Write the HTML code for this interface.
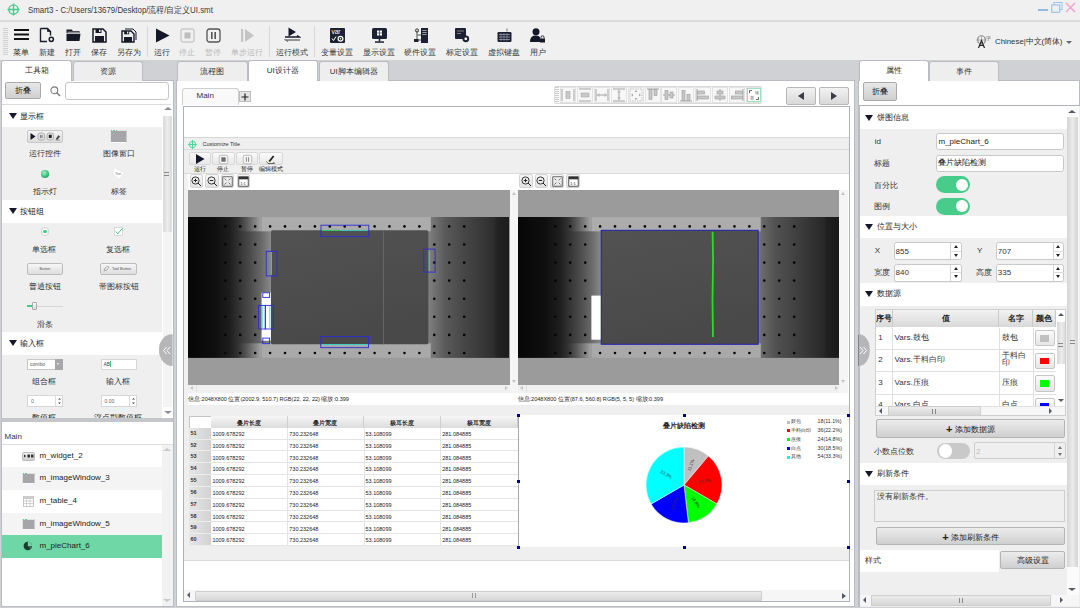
<!DOCTYPE html>
<html><head><meta charset="utf-8">
<style>
*{box-sizing:border-box}
html,body{margin:0;padding:0}
body{width:1080px;height:608px;overflow:hidden;position:relative;background:#f0f0f0;font-family:"Liberation Sans",sans-serif;color:#222;font-size:9px}
.a{position:absolute}
.t{position:absolute;white-space:nowrap;line-height:1}
.tab{position:absolute;border:1px solid #b9bcc2;border-bottom:none;border-radius:3px 3px 0 0;background:#eeeeee;text-align:center;font-size:8px;color:#333}
.tab.on{background:#fff}
.btn{position:absolute;border:1px solid #aaa;border-radius:2px;background:linear-gradient(#e8e8e8,#cfcfcf);text-align:center;color:#222}
.sep{position:absolute;width:1px;background:#d8d8d8}
.hdr{position:absolute;background:#fff}
.tri{position:absolute;width:0;height:0;border-left:4.8px solid transparent;border-right:4.8px solid transparent;border-top:6.2px solid #14182a;margin-top:-1px;margin-left:-0.4px}
</style></head><body>
<!-- title bar -->
<svg class="a" style="left:6.5px;top:2.5px" width="13" height="13" viewBox="0 0 13 13"><circle cx="6.5" cy="6.5" r="4.6" fill="none" stroke="#3fcf8e" stroke-width="1.4"/><path d="M6.5 0.5V12.5M0.5 6.5H12.5" stroke="#3fcf8e" stroke-width="1.4"/></svg>
<div class="t" style="left:28px;top:5.5px;font-size:9px;color:#3a3a3a;transform:scaleX(0.876);transform-origin:0 0">Smart3 - C:/Users/13679/Desktop/流程/自定义UI.smt</div>
<div class="a" style="left:1038px;top:9px;width:10px;height:2px;background:#8fbbe6"></div>
<div class="a" style="left:0;top:20px;width:1080px;height:2px;background:#dadada"></div>


<!-- toolbar -->
<div class="a" style="left:3px;top:28px;width:4px;height:27px;background-image:repeating-linear-gradient(0deg,#c8c8c8 0 1px,transparent 1px 2px);opacity:.8;width:5px"></div>
<!-- menu -->
<svg class="a" style="left:13px;top:28px" width="17" height="13" viewBox="0 0 17 13"><path d="M1 2H16M1 6.5H16M1 11H16" stroke="#111" stroke-width="2"/></svg>
<!-- new -->
<svg class="a" style="left:39px;top:27px" width="17" height="16" viewBox="0 0 17 16"><path d="M1.5 1.5H8.5L11.5 4.5V8.5M8 14.5H1.5V1.5" fill="none" stroke="#1a1d2b" stroke-width="1.4"/><path d="M8.5 1.5L11.5 4.5H8.5Z" fill="#1a1d2b" stroke="#1a1d2b" stroke-width="0.8"/><circle cx="12.3" cy="12.3" r="2.1" fill="#f0f0f0" stroke="#1a1d2b" stroke-width="1.5"/></svg>
<!-- open -->
<svg class="a" style="left:66px;top:28px" width="15" height="14" viewBox="0 0 15 14"><path d="M0.5 1.5H5.5L7 3H13.5V5H0.5Z" fill="#161a28"/><path d="M0.5 5.8H14.5L13.5 13H0.5Z" fill="#161a28"/><path d="M1.5 4.2H13" stroke="#f0f0f0" stroke-width="0.8"/></svg>
<!-- save -->
<svg class="a" style="left:92px;top:28px" width="15" height="15" viewBox="0 0 15 15"><path d="M1 1H11L14 4V14H1Z" fill="none" stroke="#161a28" stroke-width="1.5"/><rect x="3.5" y="1" width="6" height="4" fill="#161a28"/><rect x="7" y="1.8" width="1.5" height="2.2" fill="#f0f0f0"/><rect x="3" y="8" width="9" height="6" fill="#161a28"/></svg>
<!-- save as -->
<svg class="a" style="left:121px;top:28px" width="16" height="15" viewBox="0 0 16 15"><path d="M4 1H12L15 4V12" fill="none" stroke="#161a28" stroke-width="1"/><path d="M1 3H10L13 6V14H1Z" fill="#f0f0f0" stroke="#161a28" stroke-width="1.4"/><rect x="3.2" y="3" width="5" height="3.3" fill="#161a28"/><rect x="6" y="3.6" width="1.3" height="1.9" fill="#f0f0f0"/><rect x="3" y="9" width="8" height="5" fill="#161a28"/></svg>
<div class="sep" style="left:147px;top:26px;height:31px"></div>
<!-- run -->
<svg class="a" style="left:155px;top:28px" width="15" height="15" viewBox="0 0 15 15"><path d="M1 0.5L14.5 7.5L1 14.5Z" fill="#151829"/></svg>
<!-- stop (disabled) -->
<svg class="a" style="left:180px;top:28px" width="15" height="15" viewBox="0 0 15 15"><rect x="1" y="1" width="13" height="13" rx="2" fill="none" stroke="#c9c9c9" stroke-width="1.4"/><rect x="4.5" y="4.5" width="6" height="6" fill="#bdbdbd"/></svg>
<!-- pause -->
<svg class="a" style="left:206px;top:28px" width="15" height="15" viewBox="0 0 15 15"><rect x="1" y="1" width="13" height="13" rx="2.5" fill="none" stroke="#555" stroke-width="1.3"/><rect x="5" y="4" width="1.6" height="7" fill="#555"/><rect x="8.4" y="4" width="1.6" height="7" fill="#555"/></svg>
<!-- step (disabled) -->
<svg class="a" style="left:240px;top:28px" width="15" height="15" viewBox="0 0 15 15"><rect x="1" y="1" width="2.2" height="13" fill="#c4c4c4"/><path d="M5 1L14 7.5L5 14Z" fill="#c4c4c4"/></svg>
<div class="sep" style="left:269px;top:26px;height:31px"></div>
<!-- run mode -->
<svg class="a" style="left:284px;top:27px" width="17" height="16" viewBox="0 0 17 16"><path d="M4.5 0.5L12 5L4.5 9.5Z" fill="#151829"/><path d="M1 10H15.5L13 8.5" fill="none" stroke="#151829" stroke-width="1.3"/><path d="M16 13H1.5L4 14.5" fill="none" stroke="#777" stroke-width="1.3"/></svg>
<div class="sep" style="left:314px;top:26px;height:31px"></div>
<!-- var -->
<svg class="a" style="left:330px;top:28px" width="15" height="15" viewBox="0 0 15 15"><rect x="0" y="0" width="15" height="15" rx="1" fill="#1c2233"/><text x="1.5" y="6.3" font-size="6.5" fill="#fff" font-family="Liberation Sans">var</text><path d="M2 10.5L3.5 12.5L6 8.5" fill="none" stroke="#fff" stroke-width="1"/><circle cx="10.5" cy="10.8" r="3" fill="#fff"/><circle cx="10.5" cy="10.8" r="1.8" fill="#1c2233"/><circle cx="10.5" cy="10.8" r="0.8" fill="#fff"/></svg>
<!-- display -->
<svg class="a" style="left:372px;top:28px" width="15" height="15" viewBox="0 0 15 15"><rect x="0" y="0" width="15" height="11" rx="1.5" fill="#1c2233"/><rect x="5" y="2.5" width="2.2" height="2.2" fill="#fff"/><rect x="7.8" y="2.5" width="2.2" height="2.2" fill="#fff"/><rect x="5" y="5.3" width="2.2" height="2.2" fill="#fff"/><rect x="7.8" y="5.3" width="2.2" height="2.2" fill="#fff"/><rect x="6.7" y="11" width="1.6" height="2.5" fill="#1c2233"/><rect x="3" y="13.3" width="9" height="1.5" fill="#1c2233"/></svg>
<!-- hardware -->
<svg class="a" style="left:414px;top:28px" width="14" height="15" viewBox="0 0 14 15"><rect x="7" y="0" width="7" height="15" fill="#1c2233"/><rect x="8.3" y="2" width="4.4" height="0.9" fill="#aaa"/><rect x="8.3" y="4" width="4.4" height="0.9" fill="#aaa"/><rect x="8.3" y="6" width="4.4" height="0.9" fill="#aaa"/><path d="M3 2.5V12H7M3 7H7" fill="none" stroke="#555" stroke-width="1"/><circle cx="3" cy="2.5" r="1.6" fill="none" stroke="#333" stroke-width="1"/><rect x="0" y="11" width="4.5" height="3" fill="#1c2233"/></svg>
<!-- calib -->
<svg class="a" style="left:455px;top:28px" width="15" height="15" viewBox="0 0 15 15"><rect x="0" y="0" width="11" height="11" rx="1" fill="#1c2233"/><path d="M2 3H9M2 5.5H6" stroke="#888" stroke-width="0.9"/><circle cx="10.8" cy="10.8" r="3.4" fill="#1c2233"/><circle cx="10.8" cy="10.8" r="1.4" fill="#fff"/></svg>
<!-- keyboard -->
<svg class="a" style="left:497px;top:28px" width="15" height="15" viewBox="0 0 15 15"><path d="M10 0.5V3.5" stroke="#555" stroke-width="0.8"/><rect x="0.5" y="4" width="14" height="10" rx="1.2" fill="#1c2233"/><path d="M2 6.5H13M2 9H13M2 11.5H13" stroke="#aab" stroke-width="0.7"/><path d="M4 5V13M7 5V13M10 5V13" stroke="#aab" stroke-width="0.5"/></svg>
<!-- user -->
<svg class="a" style="left:530px;top:28px" width="15" height="15" viewBox="0 0 15 15"><circle cx="6" cy="3.8" r="3.5" fill="#151829"/><path d="M0 14C0 9 2.5 7.5 6 7.5C8 7.5 9.5 8.3 10 9.5V14Z" fill="#151829"/><rect x="10" y="10.5" width="5" height="4" fill="#151829"/><path d="M11 10.5V9.3A1.5 1.5 0 0 1 14 9.3V10.5" fill="none" stroke="#151829" stroke-width="0.9"/></svg>
<div class="t" style="left:-9px;width:60px;text-align:center;top:48.8px;font-size:8px;color:#383838">菜单</div>
<div class="t" style="left:17px;width:60px;text-align:center;top:48.8px;font-size:8px;color:#383838">新建</div>
<div class="t" style="left:43px;width:60px;text-align:center;top:48.8px;font-size:8px;color:#383838">打开</div>
<div class="t" style="left:68.5px;width:60px;text-align:center;top:48.8px;font-size:8px;color:#383838">保存</div>
<div class="t" style="left:98.5px;width:60px;text-align:center;top:48.8px;font-size:8px;color:#383838">另存为</div>
<div class="t" style="left:131.5px;width:60px;text-align:center;top:48.8px;font-size:8px;color:#383838">运行</div>
<div class="t" style="left:157.3px;width:60px;text-align:center;top:48.8px;font-size:8px;color:#b8b8b8">停止</div>
<div class="t" style="left:183.3px;width:60px;text-align:center;top:48.8px;font-size:8px;color:#b8b8b8">暂停</div>
<div class="t" style="left:217.3px;width:60px;text-align:center;top:48.8px;font-size:8px;color:#b8b8b8">单步运行</div>
<div class="t" style="left:262px;width:60px;text-align:center;top:48.8px;font-size:8px;color:#383838">运行模式</div>
<div class="t" style="left:307px;width:60px;text-align:center;top:48.8px;font-size:8px;color:#383838">变量设置</div>
<div class="t" style="left:348.5px;width:60px;text-align:center;top:48.8px;font-size:8px;color:#383838">显示设置</div>
<div class="t" style="left:390.3px;width:60px;text-align:center;top:48.8px;font-size:8px;color:#383838">硬件设置</div>
<div class="t" style="left:431.8px;width:60px;text-align:center;top:48.8px;font-size:8px;color:#383838">标定设置</div>
<div class="t" style="left:473.5px;width:60px;text-align:center;top:48.8px;font-size:8px;color:#383838">虚拟键盘</div>
<div class="t" style="left:507.6px;width:60px;text-align:center;top:48.8px;font-size:8px;color:#383838">用户</div>

<!-- language -->
<svg class="a" style="left:976px;top:35px" width="15" height="13" viewBox="0 0 15 13"><circle cx="5.5" cy="5" r="4.3" fill="none" stroke="#777" stroke-width="0.8"/><path d="M1.2 5H9.8M5.5 0.7V9.3M3 1.5C2 4 2 6 3 8.5M8 1.5C9 4 9 6 8 8.5" fill="none" stroke="#888" stroke-width="0.6"/><path d="M2.5 13L5.5 5.5L8.5 13M3.7 10.5H7.3" fill="none" stroke="#222" stroke-width="1.2"/><text x="10" y="5" font-size="5" fill="#555">字</text></svg>
<div class="t" style="left:995px;top:38px;font-size:8px;color:#333;transform:scaleX(0.98);transform-origin:0 0">Chinese|中文(简体)</div>
<div class="a" style="left:1066px;top:41px;width:0;height:0;border-left:3px solid transparent;border-right:3px solid transparent;border-top:3.5px solid #666"></div>
<!-- window controls -->
<svg class="a" style="left:1051px;top:2px" width="12" height="11" viewBox="0 0 12 11"><rect x="3" y="0.5" width="8" height="7" fill="none" stroke="#9cc3ec" stroke-width="1"/><rect x="0.7" y="3" width="8" height="7.3" fill="#f0f0f0" stroke="#9cc3ec" stroke-width="1.2"/></svg>
<svg class="a" style="left:1065px;top:2px" width="11" height="11" viewBox="0 0 11 11"><path d="M1 1L10 10M10 1L1 10" stroke="#eea6cf" stroke-width="1.6"/></svg>

<!-- tab band -->
<div class="a" style="left:0;top:60px;width:1080px;height:548px;background:#cfd1d5"></div>

<!-- left panel -->
<div class="a" style="left:1px;top:80px;width:172.5px;height:527px;background:#fff;border:1px solid #b9bcc2"></div>
<div class="tab on" style="left:1px;top:59.5px;width:71px;height:21.5px;line-height:20px;border-bottom:none">工具箱</div>
<div class="tab" style="left:72.5px;top:61px;width:70px;height:20px;line-height:19px">资源</div>


<!-- left panel content -->
<div class="btn" style="left:5px;top:82px;width:36px;height:17px;line-height:15px;font-size:8px">折叠</div>
<svg class="a" style="left:50px;top:86px" width="11" height="11" viewBox="0 0 11 11"><circle cx="4.3" cy="4.3" r="3.4" fill="none" stroke="#777" stroke-width="1.1"/><path d="M6.8 6.8L10 10" stroke="#777" stroke-width="1.4"/></svg>
<div class="a" style="left:65px;top:82px;width:104px;height:18px;border:1px solid #c6c6c6;border-radius:3px;background:#fff"></div>
<div class="a" style="left:2px;top:104px;width:169px;height:1px;background:#dcdcdc"></div>
<!-- toolbox scroll area -->
<div class="a" style="left:2px;top:105px;width:160px;height:313px;background:#efefef;overflow:hidden">
  <div class="hdr" style="left:0;top:0;width:160px;height:22px"></div>
  <div class="tri" style="left:7px;top:9px"></div>
  <div class="t" style="left:17.5px;top:8.0px;font-size:8px;color:#222">显示框</div>
  <div class="hdr" style="left:0;top:95px;width:160px;height:22.5px"></div>
  <div class="tri" style="left:7px;top:104px"></div>
  <div class="t" style="left:17.5px;top:103.0px;font-size:8px;color:#222">按钮组</div>
  <div class="hdr" style="left:0;top:227px;width:160px;height:22.5px"></div>
  <div class="tri" style="left:7px;top:236px"></div>
  <div class="t" style="left:17.5px;top:235.0px;font-size:8px;color:#222">输入框</div>
</div>
<div class="t" style="left:10px;width:70px;text-align:center;top:150.0px;font-size:8px;color:#333;clip-path:inset(0 0 0px 0)">运行控件</div>
<div class="t" style="left:83.5px;width:70px;text-align:center;top:150.0px;font-size:8px;color:#333;clip-path:inset(0 0 0px 0)">图像窗口</div>
<div class="t" style="left:10px;width:70px;text-align:center;top:188.0px;font-size:8px;color:#333;clip-path:inset(0 0 0px 0)">指示灯</div>
<div class="t" style="left:83.5px;width:70px;text-align:center;top:188.0px;font-size:8px;color:#333;clip-path:inset(0 0 0px 0)">标签</div>
<div class="t" style="left:9px;width:70px;text-align:center;top:245.5px;font-size:8px;color:#333;clip-path:inset(0 0 0px 0)">单选框</div>
<div class="t" style="left:83px;width:70px;text-align:center;top:245.5px;font-size:8px;color:#333;clip-path:inset(0 0 0px 0)">复选框</div>
<div class="t" style="left:9.5px;width:70px;text-align:center;top:282.5px;font-size:8px;color:#333;clip-path:inset(0 0 0px 0)">普通按钮</div>
<div class="t" style="left:83.5px;width:70px;text-align:center;top:282.5px;font-size:8px;color:#333;clip-path:inset(0 0 0px 0)">带图标按钮</div>
<div class="t" style="left:9.5px;width:70px;text-align:center;top:320.5px;font-size:8px;color:#333;clip-path:inset(0 0 0px 0)">滑条</div>
<div class="t" style="left:9px;width:70px;text-align:center;top:377.5px;font-size:8px;color:#333;clip-path:inset(0 0 0px 0)">组合框</div>
<div class="t" style="left:83px;width:70px;text-align:center;top:377.5px;font-size:8px;color:#333;clip-path:inset(0 0 0px 0)">输入框</div>
<div class="t" style="left:9px;width:70px;text-align:center;top:414.0px;font-size:8px;color:#333;clip-path:inset(0 0 4px 0)">数值框</div>
<div class="t" style="left:83px;width:70px;text-align:center;top:414.0px;font-size:8px;color:#333;clip-path:inset(0 0 4px 0)">浮点型数值框</div>

<!-- widget icons -->
<div class="a" style="left:27px;top:130px;width:36px;height:13px;border:1px solid #c8c8c8;border-radius:2px;background:linear-gradient(#f4f4f4,#dedede)"></div>
<svg class="a" style="left:28px;top:131px" width="34" height="11" viewBox="0 0 34 11"><path d="M2.5 2L7.5 5.5L2.5 9Z" fill="#151829"/><rect x="10" y="2" width="6.5" height="7" rx="1.8" fill="#e0e0e0" stroke="#999" stroke-width="0.7"/><path d="M12.6 4V7M14 4V7" stroke="#333" stroke-width="0.6"/><rect x="19" y="2" width="6.5" height="7" rx="1.8" fill="#e0e0e0" stroke="#999" stroke-width="0.7"/><rect x="20.8" y="3.8" width="2.9" height="3.2" fill="#222"/><path d="M28 8L30.5 4.5L31.8 5.5L29.3 8.5ZM27.5 9H32" fill="#444" stroke="#444" stroke-width="0.5"/></svg>
<div class="a" style="left:110px;top:130px;width:17px;height:12.5px;background:#a6a6aa;border:1px solid #e4e4e4;border-bottom:1.5px solid #fafafa;border-right:1px solid #c8c8c8"></div><div class="a" style="left:111px;top:130px;width:6px;height:1px;background:repeating-linear-gradient(90deg,#5fd08f 0 1px,transparent 1px 1.6px)"></div>
<div class="a" style="left:41px;top:170px;width:7.5px;height:7.5px;border-radius:50%;background:radial-gradient(circle at 40% 35%,#a8f0c8,#2dbb73 60%,#1d8f55)"></div>
<svg class="a" style="left:111px;top:166px" width="15" height="15" viewBox="0 0 15 15"><path d="M3 1.5L13.5 6.5L8.5 13.5L1.5 8Z" fill="#fff" stroke="#e2e2e2" stroke-width="0.7"/><text x="4" y="8.5" font-size="3.4" fill="#777" font-family="Liberation Sans">Text</text></svg>
<div class="a" style="left:40.5px;top:227px;width:8.5px;height:8.5px;border-radius:50%;border:1px solid #cfcfcf;background:#fff"></div>
<div class="a" style="left:43px;top:229.5px;width:3.5px;height:3.5px;border-radius:50%;background:#3ccf86"></div>
<svg class="a" style="left:114px;top:227px" width="9" height="9" viewBox="0 0 9 9"><rect x="0.5" y="0.5" width="8" height="8" fill="#fff" stroke="#d0d0d0" stroke-width="0.8"/><path d="M1.8 4.5L3.8 6.8L8.5 1.2" fill="none" stroke="#3ccf86" stroke-width="1"/></svg>
<div class="a" style="left:27px;top:263px;width:36px;height:12px;border:1px solid #bdbdbd;border-radius:2px;background:linear-gradient(#f7f7f7,#dddddd);font-size:3.8px;line-height:10px;text-align:center;color:#555">Button</div>
<div class="a" style="left:100px;top:263px;width:37px;height:12px;border:1px solid #bdbdbd;border-radius:2px;background:linear-gradient(#f7f7f7,#dddddd);font-size:3.8px;line-height:10px;text-align:center;color:#555;padding-left:6px">Tool Button</div>
<svg class="a" style="left:103px;top:265px" width="7" height="7" viewBox="0 0 7 7"><path d="M1 6L2 3L5 1L6 2L4 5Z" fill="none" stroke="#888" stroke-width="0.6"/></svg>
<div class="a" style="left:27px;top:305.5px;width:36px;height:1px;background:#d6d6d6"></div>
<div class="a" style="left:27px;top:305px;width:6px;height:2px;background:#3ccf86"></div>
<div class="a" style="left:32px;top:302px;width:4.5px;height:8px;border:1px solid #aaa;border-radius:1px;background:linear-gradient(#fafafa,#dcdcdc)"></div>
<div class="a" style="left:27px;top:358.5px;width:36px;height:11.5px;border:1px solid #c8c8c8;background:#fff;font-size:5px;line-height:9.5px;color:#555;padding-left:2px">combo</div>
<div class="a" style="left:55px;top:358.5px;width:8px;height:11.5px;background:#a7a7aa"></div>
<div class="a" style="left:57.3px;top:363px;width:0;height:0;border-left:1.8px solid transparent;border-right:1.8px solid transparent;border-top:2px solid #fff"></div>
<div class="a" style="left:100.5px;top:358.5px;width:36px;height:11.5px;border:1px solid #d6d6d6;background:#fff;font-size:5px;line-height:9.5px;color:#444;padding-left:2px">AB<span style="display:inline-block;width:0.6px;height:6px;background:#4c8;vertical-align:middle"></span></div>
<div class="a" style="left:27px;top:395px;width:36px;height:12px;border:1px solid #d6d6d6;background:#fff;font-size:5px;line-height:10px;color:#666;padding-left:3px">0</div>
<div class="a" style="left:55px;top:396px;width:1px;height:10px;background:#ddd"></div>
<div class="a" style="left:100.5px;top:395px;width:36px;height:12px;border:1px solid #d6d6d6;background:#fff;font-size:5px;line-height:10px;color:#666;padding-left:3px">0.00</div>
<div class="a" style="left:128.5px;top:396px;width:1px;height:10px;background:#ddd"></div>
<svg class="a" style="left:56px;top:396px" width="7" height="10" viewBox="0 0 7 10"><path d="M2 3.5L3.5 2L5 3.5M2 6.5L3.5 8L5 6.5" fill="#444"/></svg>
<svg class="a" style="left:129.5px;top:396px" width="7" height="10" viewBox="0 0 7 10"><path d="M2 3.5L3.5 2L5 3.5M2 6.5L3.5 8L5 6.5" fill="#444"/></svg>
<!-- toolbox scrollbar -->
<div class="a" style="left:162px;top:105px;width:10.5px;height:313px;background:#fff"></div>
<div class="a" style="left:163px;top:115.5px;width:9px;height:116.5px;background:linear-gradient(90deg,#d9d9d9,#ececec 50%,#d9d9d9);border-radius:1px"></div>
<div class="a" style="left:163px;top:232px;width:9px;height:175px;background:#f4f4f4"></div>
<div class="a" style="left:164px;top:172px;width:5px;height:4px;background:repeating-linear-gradient(#888 0 0.7px,transparent 0.7px 1.6px)"></div>
<div class="a" style="left:163.5px;top:107px;width:0;height:0;border-left:4px solid transparent;border-right:4px solid transparent;border-bottom:3.5px solid #8a8e99"></div>
<div class="a" style="left:163.5px;top:411px;width:0;height:0;border-left:4px solid transparent;border-right:4px solid transparent;border-top:3.5px solid #8a8e99"></div>
<!-- collapse handle -->
<div class="a" style="left:158.8px;top:334.2px;width:27.6px;height:31.8px;border-radius:50%;background:#b6b6b9;clip-path:inset(0 13.8px 0 0)"></div>
<svg class="a" style="left:162px;top:345.5px" width="9" height="9" viewBox="0 0 9 9"><path d="M8 1L5 4.5L8 8M4.5 1L1.5 4.5L4.5 8" fill="none" stroke="#fff" stroke-width="1"/></svg>
<!-- splitter -->
<div class="a" style="left:2px;top:418px;width:171px;height:3.5px;background:#c4c6ca"></div>
<!-- object tree -->
<div class="t" style="left:4.5px;top:433px;font-size:8px;color:#333">Main</div>
<div class="a" style="left:2px;top:444px;width:171px;height:1px;background:#dedede"></div>
<div class="a" style="left:2px;top:467px;width:159.5px;height:23px;background:#f4f4f4"></div>
<div class="a" style="left:2px;top:512.5px;width:159.5px;height:22.5px;background:#f4f4f4"></div>
<div class="a" style="left:2px;top:535px;width:159.5px;height:22.5px;background:#6ed7a5"></div>
<div class="a" style="left:161.5px;top:445px;width:11px;height:161px;background:#f2f2f2"></div>
<div class="a" style="left:162.5px;top:447.5px;width:0;height:0;border-left:4px solid transparent;border-right:4px solid transparent;border-bottom:3.5px solid #c8c8c8"></div>
<div class="a" style="left:162.5px;top:599px;width:0;height:0;border-left:4px solid transparent;border-right:4px solid transparent;border-top:3.5px solid #c8c8c8"></div>
<div class="t" style="left:39.5px;top:451.5px;font-size:8px;color:#222">m_widget_2</div>
<div class="t" style="left:39.5px;top:474.0px;font-size:8px;color:#222">m_imageWindow_3</div>
<div class="t" style="left:39.5px;top:496.5px;font-size:8px;color:#222">m_table_4</div>
<div class="t" style="left:39.5px;top:519.5px;font-size:8px;color:#222">m_imageWindow_5</div>
<div class="t" style="left:39.5px;top:541.5px;font-size:8px;color:#222">m_pieChart_6</div>

<div class="a" style="left:22px;top:451.5px;width:12.5px;height:9px;border-radius:2px;background:linear-gradient(#efefef,#cfcfcf);border:0.5px solid #bbb"></div>
<svg class="a" style="left:23px;top:453px" width="11" height="6" viewBox="0 0 11 6"><path d="M1 1.5L3 3L1 4.5Z" fill="#222"/><rect x="4.5" y="1.5" width="2.5" height="3" fill="#333"/><rect x="8" y="1.5" width="2.5" height="3" fill="#333"/></svg>
<div class="a" style="left:22px;top:473px;width:12.5px;height:11px;background:#a6a6aa;border:1px solid #e2e2e2;border-bottom:1.5px solid #fafafa;border-right:1px solid #c8c8c8"></div><div class="a" style="left:23px;top:473px;width:5px;height:1px;background:repeating-linear-gradient(90deg,#5fd08f 0 1px,transparent 1px 1.6px)"></div>
<div class="a" style="left:22px;top:518.5px;width:12.5px;height:11px;background:#a6a6aa;border:1px solid #e2e2e2;border-bottom:1.5px solid #fafafa;border-right:1px solid #c8c8c8"></div><div class="a" style="left:23px;top:518.5px;width:5px;height:1px;background:repeating-linear-gradient(90deg,#5fd08f 0 1px,transparent 1px 1.6px)"></div>
<svg class="a" style="left:23px;top:495.5px" width="11" height="11" viewBox="0 0 11 11"><rect x="0.5" y="0.5" width="10" height="10" fill="#fff" stroke="#bbb" stroke-width="0.8"/><rect x="0.5" y="0.5" width="10" height="2.5" fill="#ccc"/><path d="M0.5 5H10.5M0.5 7.5H10.5M3.5 3V10.5M7 3V10.5" stroke="#bbb" stroke-width="0.6"/></svg>
<svg class="a" style="left:23px;top:541px" width="9" height="10" viewBox="0 0 9 10"><circle cx="4.8" cy="5" r="4.2" fill="#1d3b2f"/><path d="M4.8 5L4.8 0.8A4.2 4.2 0 0 1 9 5Z" fill="#6ed7a5"/><path d="M4.8 5L9 5A4.2 4.2 0 0 1 7.5 8.2Z" fill="#3a6b55"/></svg>

<!-- center panel -->
<div class="a" style="left:176px;top:80px;width:679px;height:527px;background:#fff;border:1px solid #b9bcc2"></div>
<div class="tab" style="left:176.5px;top:61px;width:71px;height:20px;line-height:19px">流程图</div>
<div class="tab on" style="left:247.5px;top:60px;width:70.5px;height:21px;line-height:20px">UI设计器</div>
<div class="tab" style="left:318.5px;top:61px;width:70.5px;height:20px;line-height:19px">UI脚本编辑器</div>


<!-- center content -->
<div class="tab on" style="left:182px;top:87.5px;width:57px;height:17px;background:#f9f9f9;border-color:#d0d0d0"></div><div class="t" style="left:196.5px;top:91.5px;font-size:8px;color:#333">Main</div>
<div class="a" style="left:239px;top:91px;width:12px;height:10.5px;border:1px solid #bdbdbd;background:#e4e4e4"></div>
<svg class="a" style="left:240px;top:91.5px" width="10" height="10" viewBox="0 0 10 10"><path d="M5 1.5V8.5M1.5 5H8.5" stroke="#222" stroke-width="1.2"/></svg>
<!-- align toolbar -->
<div class="a" style="left:554px;top:85.5px;width:208px;height:18px;border:1px solid #dadada;border-radius:2px;background:#fafafa"></div>
<div class="a" style="left:555px;top:87px;width:4px;height:15px;background:repeating-linear-gradient(#ccc 0 1px,transparent 1px 2px)"></div>
<svg class="a" style="left:561px;top:87.5px;background:#f7f7f7;outline:1px solid #e2e2e2;outline-offset:-0.5px" width="14" height="14" viewBox="0 0 14 14"><path d="M1 1V13M13 1V13" stroke="#999" stroke-width="0.9"/><rect x="5" y="3.5" width="4" height="7" fill="#c8c8c8" stroke="#aaa" stroke-width="0.6"/></svg>
<svg class="a" style="left:578px;top:87.5px;background:#f7f7f7;outline:1px solid #e2e2e2;outline-offset:-0.5px" width="14" height="14" viewBox="0 0 14 14"><path d="M1 1H13M1 13H13" stroke="#999" stroke-width="0.9"/><rect x="3" y="5" width="8" height="4" fill="#c8c8c8" stroke="#aaa" stroke-width="0.6"/></svg>
<svg class="a" style="left:595px;top:87.5px;background:#f7f7f7;outline:1px solid #e2e2e2;outline-offset:-0.5px" width="14" height="14" viewBox="0 0 14 14"><path d="M1 1V13M13 1V13M2 7H12" stroke="#999" stroke-width="0.9"/><path d="M2 7L4.5 5V9ZM12 7L9.5 5V9Z" fill="#bbb"/></svg>
<svg class="a" style="left:612px;top:87.5px;background:#f7f7f7;outline:1px solid #e2e2e2;outline-offset:-0.5px" width="14" height="14" viewBox="0 0 14 14"><path d="M1 1H13M1 13H13M7 2V12" stroke="#999" stroke-width="0.9"/><path d="M7 2L5 4.5H9ZM7 12L5 9.5H9Z" fill="#bbb"/></svg>
<svg class="a" style="left:629px;top:87.5px;background:#f7f7f7;outline:1px solid #e2e2e2;outline-offset:-0.5px" width="14" height="14" viewBox="0 0 14 14"><rect x="1" y="1" width="12" height="12" fill="none" stroke="#aaa" stroke-width="0.7" stroke-dasharray="1.5 1"/><path d="M7 2L5.5 4H8.5ZM7 12L5.5 10H8.5ZM2 7L4 5.5V8.5ZM12 7L10 5.5V8.5Z" fill="#aaa"/></svg>
<svg class="a" style="left:646px;top:87.5px;background:#f7f7f7;outline:1px solid #e2e2e2;outline-offset:-0.5px" width="14" height="14" viewBox="0 0 14 14"><path d="M1 1H13" stroke="#999" stroke-width="0.9"/><rect x="3" y="1.5" width="3" height="10" fill="#c8c8c8" stroke="#999" stroke-width="0.6"/><rect x="8" y="1.5" width="3" height="6" fill="#c8c8c8" stroke="#999" stroke-width="0.6"/></svg>
<svg class="a" style="left:662px;top:87.5px;background:#f7f7f7;outline:1px solid #e2e2e2;outline-offset:-0.5px" width="14" height="14" viewBox="0 0 14 14"><path d="M1 7H13" stroke="#999" stroke-width="0.9"/><rect x="3" y="2.5" width="3" height="9" fill="#c8c8c8" stroke="#999" stroke-width="0.6"/><rect x="8" y="4" width="3" height="6" fill="#c8c8c8" stroke="#999" stroke-width="0.6"/></svg>
<svg class="a" style="left:679px;top:87.5px;background:#f7f7f7;outline:1px solid #e2e2e2;outline-offset:-0.5px" width="14" height="14" viewBox="0 0 14 14"><path d="M1 13H13" stroke="#999" stroke-width="0.9"/><rect x="3" y="2.5" width="3" height="10" fill="#c8c8c8" stroke="#999" stroke-width="0.6"/><rect x="8" y="6.5" width="3" height="6" fill="#c8c8c8" stroke="#999" stroke-width="0.6"/></svg>
<svg class="a" style="left:696px;top:87.5px;background:#f7f7f7;outline:1px solid #e2e2e2;outline-offset:-0.5px" width="14" height="14" viewBox="0 0 14 14"><path d="M1 1V13" stroke="#999" stroke-width="0.9"/><rect x="1.5" y="3" width="7" height="3" fill="#c8c8c8" stroke="#999" stroke-width="0.6"/><rect x="1.5" y="8" width="11" height="3" fill="#c8c8c8" stroke="#999" stroke-width="0.6"/></svg>
<svg class="a" style="left:713.3px;top:87.5px;background:#f7f7f7;outline:1px solid #e2e2e2;outline-offset:-0.5px" width="14" height="14" viewBox="0 0 14 14"><path d="M7 1V13" stroke="#999" stroke-width="0.9"/><rect x="4" y="3" width="6" height="3" fill="#c8c8c8" stroke="#999" stroke-width="0.6"/><rect x="2" y="8" width="10" height="3" fill="#c8c8c8" stroke="#999" stroke-width="0.6"/></svg>
<svg class="a" style="left:730.4px;top:87.5px;background:#f7f7f7;outline:1px solid #e2e2e2;outline-offset:-0.5px" width="14" height="14" viewBox="0 0 14 14"><path d="M13 1V13" stroke="#999" stroke-width="0.9"/><rect x="5.5" y="3" width="7" height="3" fill="#c8c8c8" stroke="#999" stroke-width="0.6"/><rect x="1.5" y="8" width="11" height="3" fill="#c8c8c8" stroke="#999" stroke-width="0.6"/></svg>
<svg class="a" style="left:747px;top:87.5px;background:#f7f7f7;outline:1px solid #e2e2e2;outline-offset:-0.5px" width="14" height="14" viewBox="0 0 14 14"><rect x="0.5" y="0.5" width="13" height="13" fill="#fff" stroke="#7fdcae" stroke-width="0.8"/><path d="M2.5 5V2.5H5M11.5 9V11.5H9" fill="none" stroke="#444" stroke-width="0.8"/><text x="7.5" y="5.5" font-size="3.5" fill="#444">缩</text><text x="2.5" y="10.5" font-size="3.5" fill="#444">放</text></svg>

<div class="btn" style="left:786px;top:86.5px;width:30px;height:18px;background:linear-gradient(#f2f2f2,#d9d9d9);border-color:#b8b8b8"></div>
<div class="a" style="left:797.5px;top:91.5px;width:0;height:0;border-top:4px solid transparent;border-bottom:4px solid transparent;border-right:6.5px solid #3a3d45"></div>
<div class="btn" style="left:818.5px;top:86.5px;width:30px;height:18px;background:linear-gradient(#f2f2f2,#d9d9d9);border-color:#b8b8b8"></div>
<div class="a" style="left:830.5px;top:91.5px;width:0;height:0;border-top:4px solid transparent;border-bottom:4px solid transparent;border-left:6.5px solid #3a3d45"></div>
<!-- design frame -->
<div class="a" style="left:182.5px;top:106px;width:667.5px;height:496px;border:1.5px solid #aeb1b7;background:#fff"></div>
<div class="a" style="left:176px;top:80px;width:1px;height:527px;background:#b9bcc2"></div>
<!-- widget area gray -->
<div class="a" style="left:184px;top:137px;width:665px;height:423.5px;background:#efefef"></div>
<div class="a" style="left:184px;top:137px;width:665px;height:1px;background:#d8d8d8"></div>
<svg class="a" style="left:188px;top:139.5px" width="9" height="9" viewBox="0 0 9 9"><circle cx="4.5" cy="4.5" r="3.2" fill="none" stroke="#4fd69b" stroke-width="1"/><path d="M4.5 0V9M0 4.5H9" stroke="#4fd69b" stroke-width="1"/></svg>
<div class="t" style="left:202.5px;top:141.5px;font-size:5.5px;color:#333">Customize Title</div>
<div class="a" style="left:184px;top:149px;width:665px;height:1px;background:#dadada"></div>
<div class="a" style="left:184px;top:173px;width:665px;height:1px;background:#dadada"></div>
<div class="a" style="left:188.5px;top:152.3px;width:22.69999999999999px;height:13.2px;border:1px solid #d8d8d8;border-radius:2px;background:linear-gradient(#fafafa,#e8e8e8)"></div>
<div class="t" style="left:179.85px;width:40px;text-align:center;top:166.5px;font-size:5.6px;color:#222">运行</div>
<div class="a" style="left:212px;top:152.3px;width:22.5px;height:13.2px;border:1px solid #d8d8d8;border-radius:2px;background:linear-gradient(#fafafa,#e8e8e8)"></div>
<div class="t" style="left:203.25px;width:40px;text-align:center;top:166.5px;font-size:5.6px;color:#222">停止</div>
<div class="a" style="left:235.9px;top:152.3px;width:22.099999999999994px;height:13.2px;border:1px solid #d8d8d8;border-radius:2px;background:linear-gradient(#fafafa,#e8e8e8)"></div>
<div class="t" style="left:226.95px;width:40px;text-align:center;top:166.5px;font-size:5.6px;color:#222">暂停</div>
<div class="a" style="left:259.2px;top:152.3px;width:23.5px;height:13.2px;border:1px solid #d8d8d8;border-radius:2px;background:linear-gradient(#fafafa,#e8e8e8)"></div>
<div class="t" style="left:250.95px;width:40px;text-align:center;top:166.5px;font-size:5.6px;color:#222">编辑模式</div>

<svg class="a" style="left:194px;top:153px" width="12" height="12" viewBox="0 0 12 12"><path d="M2 1L10.5 6L2 11Z" fill="#151829"/></svg>
<svg class="a" style="left:218px;top:153.5px" width="11" height="11" viewBox="0 0 11 11"><rect x="1.2" y="1.2" width="8.6" height="8.6" rx="2" fill="#f6f6f6" stroke="#b4b4b4" stroke-width="0.9"/><rect x="3.3" y="3.3" width="4.4" height="4.4" fill="#6e6e6e"/></svg>
<svg class="a" style="left:241.5px;top:153.5px" width="11" height="11" viewBox="0 0 11 11"><rect x="1.2" y="1.2" width="8.6" height="8.6" rx="2" fill="#f6f6f6" stroke="#b4b4b4" stroke-width="0.9"/><path d="M4.4 3.2V7.8M6.6 3.2V7.8" stroke="#777" stroke-width="0.9"/></svg>
<svg class="a" style="left:265px;top:153.5px" width="12" height="11" viewBox="0 0 12 11"><path d="M3.5 7L8 1.5L9.3 2.6L5 8Z" fill="#222"/><path d="M1.5 7.5L3 9.5H9.5L8.5 8" fill="none" stroke="#555" stroke-width="0.9"/></svg>
<!-- image viewer backgrounds -->
<div class="a" style="left:184px;top:174px;width:665px;height:231px;background:#fff"></div>
<div class="a" style="left:184px;top:174px;width:4px;height:231px;background:#f1f1f1"></div>
<div class="a" style="left:188.2px;top:190px;width:321.5px;height:195px;background:#9b9b9b"></div>
<div class="a" style="left:509.7px;top:190px;width:8.3px;height:202.5px;background:#f5f5f5"></div>
<div class="a" style="left:188.2px;top:385px;width:321.5px;height:7.5px;background:#f0f0f0"></div>
<div class="a" style="left:518px;top:190px;width:321px;height:195px;background:#9b9b9b"></div>
<div class="a" style="left:839px;top:190px;width:8.6px;height:202.5px;background:#f5f5f5"></div>
<div class="a" style="left:518px;top:385px;width:321px;height:7.5px;background:#f0f0f0"></div>
<svg class="a" style="left:188.2px;top:216.9px" width="321.2" height="140.9" viewBox="0 0 321.2 140.9">
<defs>
<linearGradient id="gi1" x1="0" x2="1" y1="0" y2="0"><stop offset="0" stop-color="#060606"/><stop offset="0.084" stop-color="#0f0f0f"/><stop offset="0.13" stop-color="#1e1e1e"/><stop offset="0.161" stop-color="#353535"/><stop offset="0.192" stop-color="#4a4a4a"/><stop offset="0.23" stop-color="#6a6a6a"/><stop offset="0.258" stop-color="#8a8a8a"/><stop offset="0.74" stop-color="#8a8a8a"/><stop offset="0.756" stop-color="#7a7a7a"/><stop offset="0.8" stop-color="#5a5a5a"/><stop offset="0.858" stop-color="#474747"/><stop offset="0.908" stop-color="#3a3a3a"/><stop offset="0.951" stop-color="#2e2e2e"/><stop offset="0.963" stop-color="#232323"/><stop offset="1" stop-color="#1c1c1c"/></linearGradient>
<linearGradient id="gi1b" x1="0" x2="1" y1="0" y2="0"><stop offset="0" stop-color="#4a4a4a" stop-opacity="0"/><stop offset="0.6" stop-color="#7a7a7a" stop-opacity="0.8"/><stop offset="1" stop-color="#a6a6a6"/></linearGradient>
<linearGradient id="gi1r" x1="0" x2="0.3" y1="0" y2="1"><stop offset="0" stop-color="#525252"/><stop offset="1" stop-color="#494949"/></linearGradient>
</defs>
<rect width="321.2" height="140.9" fill="url(#gi1)"/>
<rect x="48.80000000000001" y="0" width="25" height="14.299999999999983" fill="url(#gi1b)"/>
<rect x="48.80000000000001" y="126.29999999999998" width="25" height="14.600000000000023" fill="url(#gi1b)"/>
<rect x="73.80000000000001" y="0" width="169" height="14.299999999999983" fill="#acacac"/>
<rect x="73.80000000000001" y="126.29999999999998" width="169" height="14.600000000000023" fill="#a9a9a9"/>
<rect x="83.0" y="13.299999999999983" width="157.40000000000003" height="114.0" rx="1.5" fill="url(#gi1r)"/>
<g fill="#050505"><circle cx="37.3" cy="9.4" r="1.3"/><circle cx="37.3" cy="27.5" r="1.3"/><circle cx="37.3" cy="45.6" r="1.3"/><circle cx="37.3" cy="63.6" r="1.3"/><circle cx="37.3" cy="81.7" r="1.3"/><circle cx="37.3" cy="99.8" r="1.3"/><circle cx="37.3" cy="117.9" r="1.3"/><circle cx="37.3" cy="136.0" r="1.3"/><circle cx="52.2" cy="9.4" r="1.3"/><circle cx="52.2" cy="27.5" r="1.3"/><circle cx="52.2" cy="45.6" r="1.3"/><circle cx="52.2" cy="63.6" r="1.3"/><circle cx="52.2" cy="81.7" r="1.3"/><circle cx="52.2" cy="99.8" r="1.3"/><circle cx="52.2" cy="117.9" r="1.3"/><circle cx="52.2" cy="136.0" r="1.3"/><circle cx="67.2" cy="9.4" r="1.3"/><circle cx="67.2" cy="27.5" r="1.3"/><circle cx="67.2" cy="45.6" r="1.3"/><circle cx="67.2" cy="63.6" r="1.3"/><circle cx="67.2" cy="81.7" r="1.3"/><circle cx="67.2" cy="99.8" r="1.3"/><circle cx="67.2" cy="117.9" r="1.3"/><circle cx="67.2" cy="136.0" r="1.3"/><circle cx="82.1" cy="9.4" r="1.3"/><circle cx="82.1" cy="136.0" r="1.3"/><circle cx="97.0" cy="9.4" r="1.3"/><circle cx="97.0" cy="136.0" r="1.3"/><circle cx="111.9" cy="9.4" r="1.3"/><circle cx="111.9" cy="136.0" r="1.3"/><circle cx="126.9" cy="9.4" r="1.3"/><circle cx="126.9" cy="136.0" r="1.3"/><circle cx="141.8" cy="9.4" r="1.3"/><circle cx="141.8" cy="136.0" r="1.3"/><circle cx="156.7" cy="9.4" r="1.3"/><circle cx="156.7" cy="136.0" r="1.3"/><circle cx="171.7" cy="9.4" r="1.3"/><circle cx="171.7" cy="136.0" r="1.3"/><circle cx="186.6" cy="9.4" r="1.3"/><circle cx="186.6" cy="136.0" r="1.3"/><circle cx="201.5" cy="9.4" r="1.3"/><circle cx="201.5" cy="136.0" r="1.3"/><circle cx="216.5" cy="9.4" r="1.3"/><circle cx="216.5" cy="136.0" r="1.3"/><circle cx="231.4" cy="9.4" r="1.3"/><circle cx="231.4" cy="136.0" r="1.3"/><circle cx="246.3" cy="9.4" r="1.3"/><circle cx="246.3" cy="27.5" r="1.3"/><circle cx="246.3" cy="45.6" r="1.3"/><circle cx="246.3" cy="63.6" r="1.3"/><circle cx="246.3" cy="81.7" r="1.3"/><circle cx="246.3" cy="99.8" r="1.3"/><circle cx="246.3" cy="117.9" r="1.3"/><circle cx="246.3" cy="136.0" r="1.3"/><circle cx="261.2" cy="9.4" r="1.3"/><circle cx="261.2" cy="27.5" r="1.3"/><circle cx="261.2" cy="45.6" r="1.3"/><circle cx="261.2" cy="63.6" r="1.3"/><circle cx="261.2" cy="81.7" r="1.3"/><circle cx="261.2" cy="99.8" r="1.3"/><circle cx="261.2" cy="117.9" r="1.3"/><circle cx="261.2" cy="136.0" r="1.3"/><circle cx="276.2" cy="9.4" r="1.3"/><circle cx="276.2" cy="27.5" r="1.3"/><circle cx="276.2" cy="45.6" r="1.3"/><circle cx="276.2" cy="63.6" r="1.3"/><circle cx="276.2" cy="81.7" r="1.3"/><circle cx="276.2" cy="99.8" r="1.3"/><circle cx="276.2" cy="117.9" r="1.3"/><circle cx="276.2" cy="136.0" r="1.3"/></g>
<rect x="195.0" y="13.299999999999983" width="0.9" height="114" fill="#6a6a6a"/>
<rect x="73.60000000000002" y="75.6" width="9.3" height="48.1" fill="#fff"/>
<g fill="none" stroke="#2b2bd6" stroke-width="0.9">
<rect x="133.0" y="8.199999999999989" width="47.8" height="11.4"/>
<rect x="78.19999999999999" y="34.29999999999998" width="10.9" height="24.6"/>
<rect x="235.8" y="32.099999999999994" width="11.3" height="23"/>
<rect x="132.8" y="119.6" width="47.7" height="11.1"/>
<rect x="74.80000000000001" y="75.79999999999998" width="6.8" height="4.6"/>
<rect x="70.40000000000003" y="88.4" width="6.9" height="23.6"/>
<rect x="77.30000000000001" y="88.4" width="8" height="23.6"/>
<rect x="74.80000000000001" y="121.1" width="6.8" height="5.6"/>
</g>
<g stroke-width="0.9">
<path d="M133.8 13.400000000000006H151.8" stroke="#22e060"/><path d="M151.8 13.400000000000006H179.8" stroke="#3ad6c8"/>
<path d="M83.40000000000003 35.099999999999994V58.099999999999994" stroke="#33dcd0"/>
<path d="M241.3 33.099999999999994V54.099999999999994" stroke="#33dcd0"/>
<path d="M133.8 127.6H179.8" stroke="#33dcd0"/>
<path d="M74.80000000000001 89.1V111.1M81.80000000000001 89.1V111.1" stroke="#33e0e0"/>
</g>
</svg>
<svg class="a" style="left:518.2px;top:216.9px" width="321.2" height="140.9" viewBox="0 0 321.2 140.9">
<defs>
<linearGradient id="gi2" x1="0" x2="1" y1="0" y2="0"><stop offset="0" stop-color="#060606"/><stop offset="0.084" stop-color="#0f0f0f"/><stop offset="0.13" stop-color="#1e1e1e"/><stop offset="0.161" stop-color="#353535"/><stop offset="0.192" stop-color="#4a4a4a"/><stop offset="0.23" stop-color="#6a6a6a"/><stop offset="0.258" stop-color="#8a8a8a"/><stop offset="0.74" stop-color="#8a8a8a"/><stop offset="0.756" stop-color="#6c6c6c"/><stop offset="0.8" stop-color="#525252"/><stop offset="0.858" stop-color="#424242"/><stop offset="0.908" stop-color="#343434"/><stop offset="0.951" stop-color="#282828"/><stop offset="0.963" stop-color="#1f1f1f"/><stop offset="1" stop-color="#191919"/></linearGradient>
<linearGradient id="gi2b" x1="0" x2="1" y1="0" y2="0"><stop offset="0" stop-color="#4a4a4a" stop-opacity="0"/><stop offset="0.6" stop-color="#7a7a7a" stop-opacity="0.8"/><stop offset="1" stop-color="#a6a6a6"/></linearGradient>
<linearGradient id="gi2r" x1="0" x2="0.3" y1="0" y2="1"><stop offset="0" stop-color="#525252"/><stop offset="1" stop-color="#494949"/></linearGradient>
</defs>
<rect width="321.2" height="140.9" fill="url(#gi2)"/>
<rect x="48.80000000000001" y="0" width="25" height="14.299999999999983" fill="url(#gi2b)"/>
<rect x="48.80000000000001" y="126.29999999999998" width="25" height="14.600000000000023" fill="url(#gi2b)"/>
<rect x="73.80000000000001" y="0" width="169" height="14.299999999999983" fill="#acacac"/>
<rect x="73.80000000000001" y="126.29999999999998" width="169" height="14.600000000000023" fill="#a9a9a9"/>
<rect x="83.0" y="13.299999999999983" width="157.40000000000003" height="114.0" rx="1.5" fill="url(#gi2r)"/>
<g fill="#050505"><circle cx="37.3" cy="9.4" r="1.3"/><circle cx="37.3" cy="27.5" r="1.3"/><circle cx="37.3" cy="45.6" r="1.3"/><circle cx="37.3" cy="63.6" r="1.3"/><circle cx="37.3" cy="81.7" r="1.3"/><circle cx="37.3" cy="99.8" r="1.3"/><circle cx="37.3" cy="117.9" r="1.3"/><circle cx="37.3" cy="136.0" r="1.3"/><circle cx="52.2" cy="9.4" r="1.3"/><circle cx="52.2" cy="27.5" r="1.3"/><circle cx="52.2" cy="45.6" r="1.3"/><circle cx="52.2" cy="63.6" r="1.3"/><circle cx="52.2" cy="81.7" r="1.3"/><circle cx="52.2" cy="99.8" r="1.3"/><circle cx="52.2" cy="117.9" r="1.3"/><circle cx="52.2" cy="136.0" r="1.3"/><circle cx="67.2" cy="9.4" r="1.3"/><circle cx="67.2" cy="27.5" r="1.3"/><circle cx="67.2" cy="45.6" r="1.3"/><circle cx="67.2" cy="63.6" r="1.3"/><circle cx="67.2" cy="81.7" r="1.3"/><circle cx="67.2" cy="99.8" r="1.3"/><circle cx="67.2" cy="117.9" r="1.3"/><circle cx="67.2" cy="136.0" r="1.3"/><circle cx="82.1" cy="9.4" r="1.3"/><circle cx="82.1" cy="136.0" r="1.3"/><circle cx="97.0" cy="9.4" r="1.3"/><circle cx="97.0" cy="136.0" r="1.3"/><circle cx="111.9" cy="9.4" r="1.3"/><circle cx="111.9" cy="136.0" r="1.3"/><circle cx="126.9" cy="9.4" r="1.3"/><circle cx="126.9" cy="136.0" r="1.3"/><circle cx="141.8" cy="9.4" r="1.3"/><circle cx="141.8" cy="136.0" r="1.3"/><circle cx="156.7" cy="9.4" r="1.3"/><circle cx="156.7" cy="136.0" r="1.3"/><circle cx="171.7" cy="9.4" r="1.3"/><circle cx="171.7" cy="136.0" r="1.3"/><circle cx="186.6" cy="9.4" r="1.3"/><circle cx="186.6" cy="136.0" r="1.3"/><circle cx="201.5" cy="9.4" r="1.3"/><circle cx="201.5" cy="136.0" r="1.3"/><circle cx="216.5" cy="9.4" r="1.3"/><circle cx="216.5" cy="136.0" r="1.3"/><circle cx="231.4" cy="9.4" r="1.3"/><circle cx="231.4" cy="136.0" r="1.3"/><circle cx="246.3" cy="9.4" r="1.3"/><circle cx="246.3" cy="27.5" r="1.3"/><circle cx="246.3" cy="45.6" r="1.3"/><circle cx="246.3" cy="63.6" r="1.3"/><circle cx="246.3" cy="81.7" r="1.3"/><circle cx="246.3" cy="99.8" r="1.3"/><circle cx="246.3" cy="117.9" r="1.3"/><circle cx="246.3" cy="136.0" r="1.3"/><circle cx="261.2" cy="9.4" r="1.3"/><circle cx="261.2" cy="27.5" r="1.3"/><circle cx="261.2" cy="45.6" r="1.3"/><circle cx="261.2" cy="63.6" r="1.3"/><circle cx="261.2" cy="81.7" r="1.3"/><circle cx="261.2" cy="99.8" r="1.3"/><circle cx="261.2" cy="117.9" r="1.3"/><circle cx="261.2" cy="136.0" r="1.3"/><circle cx="276.2" cy="9.4" r="1.3"/><circle cx="276.2" cy="27.5" r="1.3"/><circle cx="276.2" cy="45.6" r="1.3"/><circle cx="276.2" cy="63.6" r="1.3"/><circle cx="276.2" cy="81.7" r="1.3"/><circle cx="276.2" cy="99.8" r="1.3"/><circle cx="276.2" cy="117.9" r="1.3"/><circle cx="276.2" cy="136.0" r="1.3"/></g>
<rect x="83.19999999999999" y="13.299999999999983" width="157" height="114" fill="none" stroke="#2222b4" stroke-width="1"/>
<rect x="73.40000000000003" y="78.6" width="9.2" height="44.1" fill="#fff"/>
<path d="M194.60000000000002 14.699999999999989L195.10000000000002 43.099999999999994L194.5 83.1L195.0 120.1" fill="none" stroke="#1ee41e" stroke-width="1.8"/>
</svg>

<div class="a" style="left:190px;top:386px;width:0;height:0;border-top:2.5px solid transparent;border-bottom:2.5px solid transparent;border-right:3px solid #c4c4c4"></div>
<div class="a" style="left:195.5px;top:385px;width:314px;height:7px;border-left:1px solid #e0e0e0"></div>
<div class="a" style="left:505px;top:386px;width:0;height:0;border-top:2.5px solid transparent;border-bottom:2.5px solid transparent;border-left:3px solid #c4c4c4"></div>
<div class="a" style="left:511.5px;top:192px;width:0;height:0;border-left:2.5px solid transparent;border-right:2.5px solid transparent;border-bottom:3px solid #c4c4c4"></div>
<div class="a" style="left:511.5px;top:380px;width:0;height:0;border-left:2.5px solid transparent;border-right:2.5px solid transparent;border-top:3px solid #c4c4c4"></div>
<div class="a" style="left:520px;top:386px;width:0;height:0;border-top:2.5px solid transparent;border-bottom:2.5px solid transparent;border-right:3px solid #c4c4c4"></div>
<div class="a" style="left:525.5px;top:385px;width:313px;height:7px;border-left:1px solid #e0e0e0"></div>
<div class="a" style="left:835px;top:386px;width:0;height:0;border-top:2.5px solid transparent;border-bottom:2.5px solid transparent;border-left:3px solid #c4c4c4"></div>
<div class="a" style="left:841px;top:192px;width:0;height:0;border-left:2.5px solid transparent;border-right:2.5px solid transparent;border-bottom:3px solid #c4c4c4"></div>
<div class="a" style="left:841px;top:380px;width:0;height:0;border-left:2.5px solid transparent;border-right:2.5px solid transparent;border-top:3px solid #c4c4c4"></div>
<div class="t" style="left:188px;top:396.5px;font-size:5.55px;color:#222">信息:2048X800 位置(2002.9, 510.7) RGB(22, 22, 22) 缩放:0.399</div>
<div class="t" style="left:517.5px;top:396.5px;font-size:5.55px;color:#222">信息:2048X800 位置(87.6, 560.8) RGB(5, 5, 5) 缩放:0.399</div>
<div class="a" style="left:184px;top:405px;width:665px;height:10px;background:#efefef"></div>
<div class="a" style="left:189.5px;top:174px;width:13.5px;height:14px;border:1px solid #d4d4d4;border-radius:2px;background:linear-gradient(#f6f6f6,#e2e2e2)"></div>
<div class="a" style="left:205.2px;top:174px;width:13.5px;height:14px;border:1px solid #d4d4d4;border-radius:2px;background:linear-gradient(#f6f6f6,#e2e2e2)"></div>
<div class="a" style="left:220.9px;top:174px;width:13.5px;height:14px;border:1px solid #d4d4d4;border-radius:2px;background:linear-gradient(#f6f6f6,#e2e2e2)"></div>
<div class="a" style="left:236.6px;top:174px;width:13.5px;height:14px;border:1px solid #d4d4d4;border-radius:2px;background:linear-gradient(#f6f6f6,#e2e2e2)"></div>
<svg class="a" style="left:191.0px;top:175.5px" width="11" height="11" viewBox="0 0 11 11"><circle cx="4.5" cy="4.5" r="3.6" fill="none" stroke="#222" stroke-width="0.9"/><path d="M2.8 4.5H6.2M4.5 2.8V6.2M7 7L10 10" stroke="#222" stroke-width="1"/></svg>
<svg class="a" style="left:206.7px;top:175.5px" width="11" height="11" viewBox="0 0 11 11"><circle cx="4.5" cy="4.5" r="3.6" fill="none" stroke="#222" stroke-width="0.9"/><path d="M2.8 4.5H6.2M7 7L10 10" stroke="#222" stroke-width="1"/></svg>
<svg class="a" style="left:222.4px;top:175.5px" width="11" height="11" viewBox="0 0 11 11"><rect x="0.8" y="0.8" width="9.4" height="9.4" fill="none" stroke="#333" stroke-width="0.7"/><path d="M2.5 2.5L4.3 4.3M8.5 2.5L6.7 4.3M2.5 8.5L4.3 6.7M8.5 8.5L6.7 6.7" stroke="#444" stroke-width="0.7"/></svg>
<svg class="a" style="left:238.1px;top:175.5px" width="11" height="11" viewBox="0 0 11 11"><rect x="0.8" y="0.8" width="9.4" height="9.4" fill="#fff" stroke="#333" stroke-width="0.8"/><rect x="0.8" y="0.8" width="9.4" height="2.5" fill="#333"/><text x="2.2" y="8.8" font-size="4" fill="#333">1:1</text></svg>
<div class="a" style="left:519.0px;top:174px;width:13.5px;height:14px;border:1px solid #d4d4d4;border-radius:2px;background:linear-gradient(#f6f6f6,#e2e2e2)"></div>
<div class="a" style="left:534.7px;top:174px;width:13.5px;height:14px;border:1px solid #d4d4d4;border-radius:2px;background:linear-gradient(#f6f6f6,#e2e2e2)"></div>
<div class="a" style="left:550.4px;top:174px;width:13.5px;height:14px;border:1px solid #d4d4d4;border-radius:2px;background:linear-gradient(#f6f6f6,#e2e2e2)"></div>
<div class="a" style="left:566.1px;top:174px;width:13.5px;height:14px;border:1px solid #d4d4d4;border-radius:2px;background:linear-gradient(#f6f6f6,#e2e2e2)"></div>
<svg class="a" style="left:520.5px;top:175.5px" width="11" height="11" viewBox="0 0 11 11"><circle cx="4.5" cy="4.5" r="3.6" fill="none" stroke="#222" stroke-width="0.9"/><path d="M2.8 4.5H6.2M4.5 2.8V6.2M7 7L10 10" stroke="#222" stroke-width="1"/></svg>
<svg class="a" style="left:536.2px;top:175.5px" width="11" height="11" viewBox="0 0 11 11"><circle cx="4.5" cy="4.5" r="3.6" fill="none" stroke="#222" stroke-width="0.9"/><path d="M2.8 4.5H6.2M7 7L10 10" stroke="#222" stroke-width="1"/></svg>
<svg class="a" style="left:551.9px;top:175.5px" width="11" height="11" viewBox="0 0 11 11"><rect x="0.8" y="0.8" width="9.4" height="9.4" fill="none" stroke="#333" stroke-width="0.7"/><path d="M2.5 2.5L4.3 4.3M8.5 2.5L6.7 4.3M2.5 8.5L4.3 6.7M8.5 8.5L6.7 6.7" stroke="#444" stroke-width="0.7"/></svg>
<svg class="a" style="left:567.6px;top:175.5px" width="11" height="11" viewBox="0 0 11 11"><rect x="0.8" y="0.8" width="9.4" height="9.4" fill="#fff" stroke="#333" stroke-width="0.8"/><rect x="0.8" y="0.8" width="9.4" height="2.5" fill="#333"/><text x="2.2" y="8.8" font-size="4" fill="#333">1:1</text></svg>


<!-- table widget -->
<div class="a" style="left:188.9px;top:415.5px;width:330px;height:130.8px;background:#fff;border:1px solid #c4c4c4;border-right:1.2px solid #a8a8ae"></div>
<div class="a" style="left:210.9px;top:416px;width:76.9px;height:11.8px;background:linear-gradient(#f6f6f6,#dcdcdc);border-right:1px solid #d0d0d0;font-size:5.5px;font-weight:bold;text-align:center;line-height:14.5px;color:#222">叠片长度</div>
<div class="a" style="left:287.8px;top:416px;width:76.19999999999999px;height:11.8px;background:linear-gradient(#f6f6f6,#dcdcdc);border-right:1px solid #d0d0d0;font-size:5.5px;font-weight:bold;text-align:center;line-height:14.5px;color:#222">叠片宽度</div>
<div class="a" style="left:364px;top:416px;width:76.69999999999999px;height:11.8px;background:linear-gradient(#f6f6f6,#dcdcdc);border-right:1px solid #d0d0d0;font-size:5.5px;font-weight:bold;text-align:center;line-height:14.5px;color:#222">极耳长度</div>
<div class="a" style="left:440.7px;top:416px;width:77.50000000000006px;height:11.8px;background:linear-gradient(#f6f6f6,#dcdcdc);border-right:1px solid #d0d0d0;font-size:5.5px;font-weight:bold;text-align:center;line-height:14.5px;color:#222">极耳宽度</div>
<div class="a" style="left:189px;top:427.80px;width:22px;height:11.82px;background:linear-gradient(90deg,#e6e6e6,#d2d2d2);border-bottom:1px solid #ececec;font-size:5.5px;font-weight:bold;line-height:11.82px;padding-left:1.5px;color:#333">51</div>
<div class="a" style="left:211px;top:438.62px;width:307px;height:1px;background:#e4e4e4"></div>
<div class="t" style="left:212.4px;top:432.00px;font-size:5.5px;color:#222;letter-spacing:0px">1009.678292</div>
<div class="t" style="left:289.3px;top:432.00px;font-size:5.5px;color:#222;letter-spacing:0px">730.232648</div>
<div class="t" style="left:365.5px;top:432.00px;font-size:5.5px;color:#222;letter-spacing:0px">53.108099</div>
<div class="t" style="left:442.2px;top:432.00px;font-size:5.5px;color:#222;letter-spacing:0px">281.084885</div>
<div class="a" style="left:189px;top:439.62px;width:22px;height:11.82px;background:linear-gradient(90deg,#e6e6e6,#d2d2d2);border-bottom:1px solid #ececec;font-size:5.5px;font-weight:bold;line-height:11.82px;padding-left:1.5px;color:#333">52</div>
<div class="a" style="left:211px;top:450.44px;width:307px;height:1px;background:#e4e4e4"></div>
<div class="t" style="left:212.4px;top:443.82px;font-size:5.5px;color:#222;letter-spacing:0px">1009.678292</div>
<div class="t" style="left:289.3px;top:443.82px;font-size:5.5px;color:#222;letter-spacing:0px">730.232648</div>
<div class="t" style="left:365.5px;top:443.82px;font-size:5.5px;color:#222;letter-spacing:0px">53.108099</div>
<div class="t" style="left:442.2px;top:443.82px;font-size:5.5px;color:#222;letter-spacing:0px">281.084885</div>
<div class="a" style="left:189px;top:451.44px;width:22px;height:11.82px;background:linear-gradient(90deg,#e6e6e6,#d2d2d2);border-bottom:1px solid #ececec;font-size:5.5px;font-weight:bold;line-height:11.82px;padding-left:1.5px;color:#333">53</div>
<div class="a" style="left:211px;top:462.26px;width:307px;height:1px;background:#e4e4e4"></div>
<div class="t" style="left:212.4px;top:455.64px;font-size:5.5px;color:#222;letter-spacing:0px">1009.678292</div>
<div class="t" style="left:289.3px;top:455.64px;font-size:5.5px;color:#222;letter-spacing:0px">730.232648</div>
<div class="t" style="left:365.5px;top:455.64px;font-size:5.5px;color:#222;letter-spacing:0px">53.108099</div>
<div class="t" style="left:442.2px;top:455.64px;font-size:5.5px;color:#222;letter-spacing:0px">281.084885</div>
<div class="a" style="left:189px;top:463.26px;width:22px;height:11.82px;background:linear-gradient(90deg,#e6e6e6,#d2d2d2);border-bottom:1px solid #ececec;font-size:5.5px;font-weight:bold;line-height:11.82px;padding-left:1.5px;color:#333">54</div>
<div class="a" style="left:211px;top:474.08px;width:307px;height:1px;background:#e4e4e4"></div>
<div class="t" style="left:212.4px;top:467.46px;font-size:5.5px;color:#222;letter-spacing:0px">1009.678292</div>
<div class="t" style="left:289.3px;top:467.46px;font-size:5.5px;color:#222;letter-spacing:0px">730.232648</div>
<div class="t" style="left:365.5px;top:467.46px;font-size:5.5px;color:#222;letter-spacing:0px">53.108099</div>
<div class="t" style="left:442.2px;top:467.46px;font-size:5.5px;color:#222;letter-spacing:0px">281.084885</div>
<div class="a" style="left:189px;top:475.08px;width:22px;height:11.82px;background:linear-gradient(90deg,#e6e6e6,#d2d2d2);border-bottom:1px solid #ececec;font-size:5.5px;font-weight:bold;line-height:11.82px;padding-left:1.5px;color:#333">55</div>
<div class="a" style="left:211px;top:485.90px;width:307px;height:1px;background:#e4e4e4"></div>
<div class="t" style="left:212.4px;top:479.28px;font-size:5.5px;color:#222;letter-spacing:0px">1009.678292</div>
<div class="t" style="left:289.3px;top:479.28px;font-size:5.5px;color:#222;letter-spacing:0px">730.232648</div>
<div class="t" style="left:365.5px;top:479.28px;font-size:5.5px;color:#222;letter-spacing:0px">53.108099</div>
<div class="t" style="left:442.2px;top:479.28px;font-size:5.5px;color:#222;letter-spacing:0px">281.084885</div>
<div class="a" style="left:189px;top:486.90px;width:22px;height:11.82px;background:linear-gradient(90deg,#e6e6e6,#d2d2d2);border-bottom:1px solid #ececec;font-size:5.5px;font-weight:bold;line-height:11.82px;padding-left:1.5px;color:#333">56</div>
<div class="a" style="left:211px;top:497.72px;width:307px;height:1px;background:#e4e4e4"></div>
<div class="t" style="left:212.4px;top:491.10px;font-size:5.5px;color:#222;letter-spacing:0px">1009.678292</div>
<div class="t" style="left:289.3px;top:491.10px;font-size:5.5px;color:#222;letter-spacing:0px">730.232648</div>
<div class="t" style="left:365.5px;top:491.10px;font-size:5.5px;color:#222;letter-spacing:0px">53.108099</div>
<div class="t" style="left:442.2px;top:491.10px;font-size:5.5px;color:#222;letter-spacing:0px">281.084885</div>
<div class="a" style="left:189px;top:498.72px;width:22px;height:11.82px;background:linear-gradient(90deg,#e6e6e6,#d2d2d2);border-bottom:1px solid #ececec;font-size:5.5px;font-weight:bold;line-height:11.82px;padding-left:1.5px;color:#333">57</div>
<div class="a" style="left:211px;top:509.54px;width:307px;height:1px;background:#e4e4e4"></div>
<div class="t" style="left:212.4px;top:502.92px;font-size:5.5px;color:#222;letter-spacing:0px">1009.678292</div>
<div class="t" style="left:289.3px;top:502.92px;font-size:5.5px;color:#222;letter-spacing:0px">730.232648</div>
<div class="t" style="left:365.5px;top:502.92px;font-size:5.5px;color:#222;letter-spacing:0px">53.108099</div>
<div class="t" style="left:442.2px;top:502.92px;font-size:5.5px;color:#222;letter-spacing:0px">281.084885</div>
<div class="a" style="left:189px;top:510.54px;width:22px;height:11.82px;background:linear-gradient(90deg,#e6e6e6,#d2d2d2);border-bottom:1px solid #ececec;font-size:5.5px;font-weight:bold;line-height:11.82px;padding-left:1.5px;color:#333">58</div>
<div class="a" style="left:211px;top:521.36px;width:307px;height:1px;background:#e4e4e4"></div>
<div class="t" style="left:212.4px;top:514.74px;font-size:5.5px;color:#222;letter-spacing:0px">1009.678292</div>
<div class="t" style="left:289.3px;top:514.74px;font-size:5.5px;color:#222;letter-spacing:0px">730.232648</div>
<div class="t" style="left:365.5px;top:514.74px;font-size:5.5px;color:#222;letter-spacing:0px">53.108099</div>
<div class="t" style="left:442.2px;top:514.74px;font-size:5.5px;color:#222;letter-spacing:0px">281.084885</div>
<div class="a" style="left:189px;top:522.36px;width:22px;height:11.82px;background:linear-gradient(90deg,#e6e6e6,#d2d2d2);border-bottom:1px solid #ececec;font-size:5.5px;font-weight:bold;line-height:11.82px;padding-left:1.5px;color:#333">59</div>
<div class="a" style="left:211px;top:533.18px;width:307px;height:1px;background:#e4e4e4"></div>
<div class="t" style="left:212.4px;top:526.56px;font-size:5.5px;color:#222;letter-spacing:0px">1009.678292</div>
<div class="t" style="left:289.3px;top:526.56px;font-size:5.5px;color:#222;letter-spacing:0px">730.232648</div>
<div class="t" style="left:365.5px;top:526.56px;font-size:5.5px;color:#222;letter-spacing:0px">53.108099</div>
<div class="t" style="left:442.2px;top:526.56px;font-size:5.5px;color:#222;letter-spacing:0px">281.084885</div>
<div class="a" style="left:189px;top:534.18px;width:22px;height:11.82px;background:linear-gradient(90deg,#e6e6e6,#d2d2d2);border-bottom:1px solid #ececec;font-size:5.5px;font-weight:bold;line-height:11.82px;padding-left:1.5px;color:#333">60</div>
<div class="a" style="left:211px;top:545.00px;width:307px;height:1px;background:#e4e4e4"></div>
<div class="t" style="left:212.4px;top:538.38px;font-size:5.5px;color:#222;letter-spacing:0px">1009.678292</div>
<div class="t" style="left:289.3px;top:538.38px;font-size:5.5px;color:#222;letter-spacing:0px">730.232648</div>
<div class="t" style="left:365.5px;top:538.38px;font-size:5.5px;color:#222;letter-spacing:0px">53.108099</div>
<div class="t" style="left:442.2px;top:538.38px;font-size:5.5px;color:#222;letter-spacing:0px">281.084885</div>
<div class="a" style="left:287.3px;top:427.8px;width:1px;height:118px;background:#e4e4e4"></div>
<div class="a" style="left:363.5px;top:427.8px;width:1px;height:118px;background:#e4e4e4"></div>
<div class="a" style="left:440.2px;top:427.8px;width:1px;height:118px;background:#e4e4e4"></div>

<!-- pie widget -->
<div class="a" style="left:518.5px;top:414.5px;width:330.5px;height:132px;background:#fff"></div>
<div class="t" style="left:644px;top:422.5px;width:80px;text-align:center;font-size:6.5px;font-weight:bold;color:#222">叠片缺陷检测</div>
<svg class="a" style="left:644px;top:444.7px" width="80" height="80" viewBox="-40 -40 80 80"><path d="M0 0L0.00 -38.00A38 38 0 0 1 24.43 -29.11Z" fill="#c0c0c0" stroke="#fff" stroke-width="0.5"/><path d="M0 0L24.43 -29.11A38 38 0 0 1 32.91 19.00Z" fill="#ff0000" stroke="#fff" stroke-width="0.5"/><path d="M0 0L32.91 19.00A38 38 0 0 1 4.41 37.74Z" fill="#00ff00" stroke="#fff" stroke-width="0.5"/><path d="M0 0L4.41 37.74A38 38 0 0 1 -32.91 19.00Z" fill="#0000ff" stroke="#fff" stroke-width="0.5"/><path d="M0 0L-32.91 19.00A38 38 0 0 1 -0.00 -38.00Z" fill="#00ffff" stroke="#fff" stroke-width="0.5"/><text x="7.15" y="-19.64" transform="rotate(-70.0 7.15 -19.64)" font-size="4.5" fill="#333" text-anchor="middle" dominant-baseline="middle" font-family="Liberation Sans">11.1%</text><text x="20.58" y="-3.63" transform="rotate(-10.0 20.58 -3.63)" font-size="4.5" fill="#333" text-anchor="middle" dominant-baseline="middle" font-family="Liberation Sans">22.2%</text><text x="11.48" y="17.46" transform="rotate(56.7 11.48 17.46)" font-size="4.5" fill="#333" text-anchor="middle" dominant-baseline="middle" font-family="Liberation Sans">14.8%</text><text x="-9.38" y="18.68" transform="rotate(-63.3 -9.38 18.68)" font-size="4.5" fill="#333" text-anchor="middle" dominant-baseline="middle" font-family="Liberation Sans">18.5%</text><text x="-18.10" y="-10.45" transform="rotate(30.0 -18.10 -10.45)" font-size="4.5" fill="#333" text-anchor="middle" dominant-baseline="middle" font-family="Liberation Sans">33.3%</text></svg>
<div class="a" style="left:787.3px;top:420.60px;width:3px;height:3px;background:#c0c0c0"></div>
<div class="t" style="left:791px;top:419.30px;font-size:5.3px;color:#333">鼓包</div>
<div class="t" style="left:817.5px;top:419.30px;font-size:5.3px;color:#333">18(11.1%)</div>
<div class="a" style="left:787.3px;top:429.35px;width:3px;height:3px;background:#ff0000"></div>
<div class="t" style="left:791px;top:428.05px;font-size:5.3px;color:#333">干料白印</div>
<div class="t" style="left:817.5px;top:428.05px;font-size:5.3px;color:#333">36(22.2%)</div>
<div class="a" style="left:787.3px;top:438.10px;width:3px;height:3px;background:#00ff00"></div>
<div class="t" style="left:791px;top:436.80px;font-size:5.3px;color:#333">压痕</div>
<div class="t" style="left:817.5px;top:436.80px;font-size:5.3px;color:#333">24(14.8%)</div>
<div class="a" style="left:787.3px;top:446.85px;width:3px;height:3px;background:#0000ff"></div>
<div class="t" style="left:791px;top:445.55px;font-size:5.3px;color:#333">白点</div>
<div class="t" style="left:817.5px;top:445.55px;font-size:5.3px;color:#333">30(18.5%)</div>
<div class="a" style="left:787.3px;top:455.60px;width:3px;height:3px;background:#00ffff"></div>
<div class="t" style="left:791px;top:454.30px;font-size:5.3px;color:#333">其他</div>
<div class="t" style="left:817.5px;top:454.30px;font-size:5.3px;color:#333">54(33.3%)</div>
<div class="a" style="left:517.0px;top:414.0px;width:3.2px;height:3.2px;background:#00008b"></div>
<div class="a" style="left:682.5px;top:413.5px;width:3.2px;height:3.2px;background:#00008b"></div>
<div class="a" style="left:846.5px;top:413.5px;width:3.2px;height:3.2px;background:#00008b"></div>
<div class="a" style="left:517.0px;top:479.5px;width:3.2px;height:3.2px;background:#00008b"></div>
<div class="a" style="left:846.5px;top:479.5px;width:3.2px;height:3.2px;background:#00008b"></div>
<div class="a" style="left:517.0px;top:545.5px;width:3.2px;height:3.2px;background:#00008b"></div>
<div class="a" style="left:682.5px;top:545.5px;width:3.2px;height:3.2px;background:#00008b"></div>
<div class="a" style="left:846.5px;top:545.5px;width:3.2px;height:3.2px;background:#00008b"></div>

<div class="a" style="left:184px;top:560px;width:665px;height:1px;background:#dadada"></div>
<!-- design h-scroll -->
<div class="a" style="left:184px;top:590px;width:665px;height:11px;background:#f6f6f6"></div>
<div class="a" style="left:195px;top:590.5px;width:566.5px;height:10px;background:linear-gradient(#ececec,#d8d8d8);border:1px solid #cfcfcf;border-radius:1px"></div>
<div class="a" style="left:186.5px;top:592.3px;width:0;height:0;border-top:3.4px solid transparent;border-bottom:3.4px solid transparent;border-right:3.8px solid #5a5f6a"></div>
<div class="a" style="left:842px;top:592.5px;width:0;height:0;border-top:3.3px solid transparent;border-bottom:3.3px solid transparent;border-left:4px solid #555b66"></div>
<div class="a" style="left:472px;top:592.5px;width:5px;height:5px;background:repeating-linear-gradient(90deg,#999 0 0.7px,transparent 0.7px 1.6px)"></div>

<!-- right panel -->
<div class="a" style="left:858px;top:80px;width:222px;height:527px;background:#fff;border:1px solid #b9bcc2"></div>
<div class="tab on" style="left:858.5px;top:60px;width:70px;height:21px;line-height:20px">属性</div>
<div class="tab" style="left:929px;top:61px;width:70px;height:20px;line-height:19px">事件</div>


<!-- right content -->
<div class="btn" style="left:863px;top:81.5px;width:34px;height:19px;line-height:17px;font-size:8px">折叠</div>
<div class="a" style="left:858.5px;top:105px;width:221.5px;height:502px;border-top:1.2px solid #b0b3ba;border-left:1px solid #b9bcc2;background:#efefef"></div>
<div class="hdr" style="left:859.5px;top:106.2px;width:207px;height:23px"></div>
<div class="tri" style="left:865px;top:115.5px"></div>
<div class="t" style="left:876.5px;top:113.5px;font-size:8px;color:#222">饼图信息</div>
<div class="t" style="left:874.8px;top:137.5px;font-size:8px;color:#333">id</div>
<div class="t" style="left:874px;top:160px;font-size:8px;color:#333">标题</div>
<div class="t" style="left:874px;top:182px;font-size:8px;color:#333">百分比</div>
<div class="t" style="left:874px;top:202.8px;font-size:8px;color:#333">图例</div>
<div class="a" style="left:936.3px;top:133.3px;width:128px;height:17.2px;border:1px solid #c9c9c9;border-radius:2.5px;background:#fff"></div>
<div class="t" style="left:938.5px;top:137.5px;font-size:8px;color:#222">m_pieChart_6</div>
<div class="a" style="left:936.3px;top:154.6px;width:128px;height:17.3px;border:1px solid #c9c9c9;border-radius:2.5px;background:#fff"></div>
<div class="t" style="left:938px;top:159px;font-size:8px;color:#222">叠片缺陷检测</div>
<div class="a" style="left:936.3px;top:176px;width:34px;height:17.2px;border-radius:9px;background:#48cc8a"></div>
<div class="a" style="left:956px;top:178.5px;width:12.3px;height:12.3px;border-radius:50%;background:#fff"></div>
<div class="a" style="left:936.3px;top:197.5px;width:34px;height:17.2px;border-radius:9px;background:#48cc8a"></div>
<div class="a" style="left:956px;top:200px;width:12.3px;height:12.3px;border-radius:50%;background:#fff"></div>
<div class="hdr" style="left:859.5px;top:215.5px;width:207px;height:22.6px"></div>
<div class="tri" style="left:865px;top:225px"></div>
<div class="t" style="left:876.5px;top:223.0px;font-size:8px;color:#222">位置与大小</div>
<div class="t" style="left:874.8px;top:246.5px;font-size:8px;color:#333">X</div>
<div class="t" style="left:976.9px;top:246.5px;font-size:8px;color:#333">Y</div>
<div class="t" style="left:874px;top:269px;font-size:8px;color:#333">宽度</div>
<div class="t" style="left:976px;top:269px;font-size:8px;color:#333">高度</div>
<div class="a" style="left:894px;top:242.3px;width:68.2px;height:17.8px;border:1px solid #c9c9c9;border-radius:2.5px;background:#fff"></div>
<div class="a" style="left:950.4px;top:243.3px;width:1px;height:15.8px;background:#d4d4d4"></div>
<div class="a" style="left:953.5px;top:245.3px;width:0;height:0;border-left:2.5px solid transparent;border-right:2.5px solid transparent;border-bottom:3px solid #222"></div><div class="a" style="left:950.4px;top:250.9px;width:11px;height:0.8px;background:#dcdcdc"></div>
<div class="a" style="left:953.5px;top:253.8px;width:0;height:0;border-left:2.5px solid transparent;border-right:2.5px solid transparent;border-top:3px solid #222"></div>
<div class="t" style="left:895.5px;top:247.5px;font-size:8px;color:#333">855</div>
<div class="a" style="left:996.25px;top:242.3px;width:68.2px;height:17.8px;border:1px solid #c9c9c9;border-radius:2.5px;background:#fff"></div>
<div class="a" style="left:1052.65px;top:243.3px;width:1px;height:15.8px;background:#d4d4d4"></div>
<div class="a" style="left:1055.75px;top:245.3px;width:0;height:0;border-left:2.5px solid transparent;border-right:2.5px solid transparent;border-bottom:3px solid #222"></div><div class="a" style="left:1052.65px;top:250.9px;width:11px;height:0.8px;background:#dcdcdc"></div>
<div class="a" style="left:1055.75px;top:253.8px;width:0;height:0;border-left:2.5px solid transparent;border-right:2.5px solid transparent;border-top:3px solid #222"></div>
<div class="t" style="left:997.75px;top:247.5px;font-size:8px;color:#333">707</div>
<div class="a" style="left:894px;top:263.75px;width:68.2px;height:17.8px;border:1px solid #c9c9c9;border-radius:2.5px;background:#fff"></div>
<div class="a" style="left:950.4px;top:264.75px;width:1px;height:15.8px;background:#d4d4d4"></div>
<div class="a" style="left:953.5px;top:266.75px;width:0;height:0;border-left:2.5px solid transparent;border-right:2.5px solid transparent;border-bottom:3px solid #222"></div><div class="a" style="left:950.4px;top:272.35px;width:11px;height:0.8px;background:#dcdcdc"></div>
<div class="a" style="left:953.5px;top:275.25px;width:0;height:0;border-left:2.5px solid transparent;border-right:2.5px solid transparent;border-top:3px solid #222"></div>
<div class="t" style="left:895.5px;top:268.95px;font-size:8px;color:#333">840</div>
<div class="a" style="left:996.25px;top:263.75px;width:68.2px;height:17.8px;border:1px solid #c9c9c9;border-radius:2.5px;background:#fff"></div>
<div class="a" style="left:1052.65px;top:264.75px;width:1px;height:15.8px;background:#d4d4d4"></div>
<div class="a" style="left:1055.75px;top:266.75px;width:0;height:0;border-left:2.5px solid transparent;border-right:2.5px solid transparent;border-bottom:3px solid #222"></div><div class="a" style="left:1052.65px;top:272.35px;width:11px;height:0.8px;background:#dcdcdc"></div>
<div class="a" style="left:1055.75px;top:275.25px;width:0;height:0;border-left:2.5px solid transparent;border-right:2.5px solid transparent;border-top:3px solid #222"></div>
<div class="t" style="left:997.75px;top:268.95px;font-size:8px;color:#333">335</div>

<div class="hdr" style="left:859.5px;top:282.5px;width:207px;height:23.3px"></div>
<div class="tri" style="left:865px;top:292px"></div>
<div class="t" style="left:876.5px;top:290.0px;font-size:8px;color:#222">数据源</div>
<!-- data table -->
<div class="a" style="left:874.7px;top:308.6px;width:191px;height:107.5px;border:1px solid #cfcfcf;background:#fff;overflow:hidden">
<div class="a" style="left:0.0px;top:0;width:16.899999999999977px;height:17.2px;background:linear-gradient(#f2f2f2,#d9d9d9);border-right:1px solid #c9c9c9;font-size:8px;font-weight:bold;text-align:center;line-height:17.5px;color:#222;white-space:nowrap;overflow:hidden">序号</div>
<div class="a" style="left:16.899999999999977px;top:0;width:106.89999999999998px;height:17.2px;background:linear-gradient(#f2f2f2,#d9d9d9);border-right:1px solid #c9c9c9;font-size:8px;font-weight:bold;text-align:center;line-height:17.5px;color:#222;white-space:nowrap;overflow:hidden">值</div>
<div class="a" style="left:123.79999999999995px;top:0;width:33.59999999999991px;height:17.2px;background:linear-gradient(#f2f2f2,#d9d9d9);border-right:1px solid #c9c9c9;font-size:8px;font-weight:bold;text-align:center;line-height:17.5px;color:#222;white-space:nowrap;overflow:hidden">名字</div>
<div class="a" style="left:157.39999999999986px;top:0;width:22.90000000000009px;height:17.2px;background:linear-gradient(#f2f2f2,#d9d9d9);border-right:1px solid #c9c9c9;font-size:8px;font-weight:bold;text-align:center;line-height:17.5px;color:#222;white-space:nowrap;overflow:hidden">颜色</div>
<div class="a" style="left:0;top:39.1px;width:180px;height:1px;background:#e0e0e0"></div>
<div class="t" style="left:2.6px;top:24.0px;font-size:8px;color:#333">1</div>
<div class="t" style="left:18.9px;top:24.0px;font-size:8px;color:#333">Vars.鼓包</div>
<div class="t" style="left:125.9px;top:24.0px;font-size:8px;color:#333">鼓包</div>
<div class="a" style="left:158.9px;top:20.5px;width:20.9px;height:16.4px;border:1px solid #c6c6c6;border-radius:2px;background:linear-gradient(#fbfbfb,#e6e6e6)"></div>
<div class="a" style="left:164.3px;top:25.5px;width:9.4px;height:6.8px;background:#c0c0c0"></div>
<div class="a" style="left:0;top:61.7px;width:180px;height:1px;background:#e0e0e0"></div>
<div class="t" style="left:2.6px;top:46.6px;font-size:8px;color:#333">2</div>
<div class="t" style="left:18.9px;top:46.6px;font-size:8px;color:#333">Vars.干料白印</div>
<div class="a" style="left:125.9px;top:42.1px;font-size:8px;line-height:7.5px;color:#333">干料白<br>印</div>
<div class="a" style="left:158.9px;top:43.1px;width:20.9px;height:16.4px;border:1px solid #c6c6c6;border-radius:2px;background:linear-gradient(#fbfbfb,#e6e6e6)"></div>
<div class="a" style="left:164.3px;top:48.1px;width:9.4px;height:6.8px;background:#ff0000"></div>
<div class="a" style="left:0;top:84.3px;width:180px;height:1px;background:#e0e0e0"></div>
<div class="t" style="left:2.6px;top:69.2px;font-size:8px;color:#333">3</div>
<div class="t" style="left:18.9px;top:69.2px;font-size:8px;color:#333">Vars.压痕</div>
<div class="t" style="left:125.9px;top:69.2px;font-size:8px;color:#333">压痕</div>
<div class="a" style="left:158.9px;top:65.7px;width:20.9px;height:16.4px;border:1px solid #c6c6c6;border-radius:2px;background:linear-gradient(#fbfbfb,#e6e6e6)"></div>
<div class="a" style="left:164.3px;top:70.7px;width:9.4px;height:6.8px;background:#00ff00"></div>
<div class="a" style="left:0;top:106.9px;width:180px;height:1px;background:#e0e0e0"></div>
<div class="t" style="left:2.6px;top:91.8px;font-size:8px;color:#333">4</div>
<div class="t" style="left:18.9px;top:91.8px;font-size:8px;color:#333">Vars.白点</div>
<div class="t" style="left:125.9px;top:91.8px;font-size:8px;color:#333">白点</div>
<div class="a" style="left:158.9px;top:88.3px;width:20.9px;height:16.4px;border:1px solid #c6c6c6;border-radius:2px;background:linear-gradient(#fbfbfb,#e6e6e6)"></div>
<div class="a" style="left:164.3px;top:93.3px;width:9.4px;height:6.8px;background:#0000ff"></div>
<div class="a" style="left:16.399999999999977px;top:18px;width:1px;height:90px;background:#e0e0e0"></div>
<div class="a" style="left:123.29999999999995px;top:18px;width:1px;height:90px;background:#e0e0e0"></div>
<div class="a" style="left:156.89999999999986px;top:18px;width:1px;height:90px;background:#e0e0e0"></div>

<div class="a" style="left:180.3px;top:0;width:10.7px;height:96.4px;background:#fff"></div>
<div class="a" style="left:181px;top:12.8px;width:9.5px;height:41.6px;background:linear-gradient(90deg,#d6d6d6,#ececec 50%,#d6d6d6)"></div>
<div class="a" style="left:182px;top:33px;width:5px;height:4px;background:repeating-linear-gradient(#888 0 0.7px,transparent 0.7px 1.6px)"></div>
<div class="a" style="left:182px;top:3.5px;width:0;height:0;border-left:3.5px solid transparent;border-right:3.5px solid transparent;border-bottom:3.5px solid #555b66"></div>
<div class="a" style="left:182px;top:89.5px;width:0;height:0;border-left:3.5px solid transparent;border-right:3.5px solid transparent;border-top:3.5px solid #555b66"></div>
<div class="a" style="left:0;top:96.4px;width:191px;height:11px;background:#f6f6f6;border-top:1px solid #e2e2e2"></div>
<div class="a" style="left:12.8px;top:96.9px;width:92.7px;height:10px;background:linear-gradient(#ececec,#d6d6d6);border:1px solid #cfcfcf"></div>
<div class="a" style="left:56px;top:99px;width:5px;height:5px;background:repeating-linear-gradient(90deg,#888 0 0.7px,transparent 0.7px 1.6px)"></div>
<div class="a" style="left:3.5px;top:98.5px;width:0;height:0;border-top:3.3px solid transparent;border-bottom:3.3px solid transparent;border-right:3.5px solid #555b66"></div>
<div class="a" style="left:173.5px;top:98.5px;width:0;height:0;border-top:3.3px solid transparent;border-bottom:3.3px solid transparent;border-left:3.5px solid #555b66"></div>
</div>
<div class="btn" style="left:875.9px;top:419.2px;width:188.8px;height:18.7px;line-height:17px;font-size:8px;background:linear-gradient(#ececec,#cfcfcf);border-color:#b4b4b4"><span style="font-weight:bold;font-size:11px;position:relative;top:0.5px">+</span> 添加数据源</div>
<div class="t" style="left:874.3px;top:447.5px;font-size:8px;color:#333">小数点位数</div>
<div class="a" style="left:937px;top:442.6px;width:33px;height:16.9px;border-radius:9px;background:#c9c9c9"></div>
<div class="a" style="left:938.5px;top:444.2px;width:13.5px;height:13.5px;border-radius:50%;background:#fff"></div>
<div class="a" style="left:974px;top:442.2px;width:92.2px;height:17.3px;border:1px solid #cdcdcd;border-radius:2px;background:#efefef"></div>
<div class="a" style="left:1054px;top:443px;width:1px;height:15.6px;background:#d4d4d4"></div>
<div class="a" style="left:1057.5px;top:446px;width:0;height:0;border-left:2.5px solid transparent;border-right:2.5px solid transparent;border-bottom:3px solid #777"></div>
<div class="a" style="left:1057.5px;top:452.5px;width:0;height:0;border-left:2.5px solid transparent;border-right:2.5px solid transparent;border-top:3px solid #777"></div>
<div class="t" style="left:976px;top:447.5px;font-size:8px;color:#bbb">2</div>
<div class="hdr" style="left:859.5px;top:462.6px;width:207px;height:22.8px"></div>
<div class="tri" style="left:865px;top:472px"></div>
<div class="t" style="left:876.5px;top:470.0px;font-size:8px;color:#222">刷新条件</div>
<div class="a" style="left:874.4px;top:489.5px;width:191.1px;height:32.6px;border:1px solid #cdcdcd;background:#efefef"></div>
<div class="t" style="left:877px;top:492.5px;font-size:8px;color:#333">没有刷新条件。</div>
<div class="btn" style="left:876px;top:527.4px;width:189px;height:17.8px;line-height:16px;font-size:8px;background:linear-gradient(#ececec,#cfcfcf);border-color:#b4b4b4"><span style="font-weight:bold;font-size:11px;position:relative;top:0.5px">+</span> 添加刷新条件</div>
<div class="hdr" style="left:859.5px;top:549.9px;width:139.7px;height:22.3px"></div>
<div class="t" style="left:865.1px;top:556.5px;font-size:8px;color:#333">样式</div>
<div class="btn" style="left:1000.2px;top:551.1px;width:64.8px;height:18.4px;line-height:18px;font-size:8px;background:linear-gradient(#ececec,#cfcfcf);border-color:#b4b4b4">高级设置</div>
<!-- right scrollbar -->
<div class="a" style="left:1066.5px;top:106.2px;width:12px;height:488.5px;background:#fbfbfb"></div>
<div class="a" style="left:1067px;top:116.5px;width:11px;height:450px;background:linear-gradient(90deg,#d4d4d4,#ebebeb 50%,#d4d4d4)"></div>
<div class="a" style="left:1069.5px;top:339.5px;width:5px;height:4.5px;background:repeating-linear-gradient(#888 0 0.7px,transparent 0.7px 1.6px)"></div>
<div class="a" style="left:1068px;top:109.5px;width:0;height:0;border-left:4px solid transparent;border-right:4px solid transparent;border-bottom:3.5px solid #555b66"></div>
<div class="a" style="left:1068px;top:587.5px;width:0;height:0;border-left:4px solid transparent;border-right:4px solid transparent;border-top:3.5px solid #555b66"></div>
<div class="a" style="left:859.5px;top:594.7px;width:219px;height:11.5px;background:#f6f6f6"></div>
<div class="a" style="left:871.4px;top:595.2px;width:179.3px;height:10.5px;background:linear-gradient(#ececec,#d6d6d6);border:1px solid #cfcfcf"></div>
<div class="a" style="left:959px;top:597.5px;width:5px;height:5.5px;background:repeating-linear-gradient(90deg,#888 0 0.7px,transparent 0.7px 1.6px)"></div>
<div class="a" style="left:862.5px;top:597px;width:0;height:0;border-top:3.3px solid transparent;border-bottom:3.3px solid transparent;border-right:3.8px solid #555b66"></div>
<div class="a" style="left:1059.5px;top:597px;width:0;height:0;border-top:3.3px solid transparent;border-bottom:3.3px solid transparent;border-left:3.8px solid #555b66"></div>
<!-- right collapse handle -->
<div class="a" style="left:846.5px;top:334.3px;width:23.2px;height:31.6px;border-radius:50%;background:#b6b6b9;clip-path:inset(0 0 0 11.7px)"></div>
<div class="a" style="left:858px;top:334.5px;width:1.2px;height:31px;background:#7d828c"></div>
<svg class="a" style="left:859px;top:345.5px" width="9" height="9" viewBox="0 0 9 9"><path d="M1 1L4 4.5L1 8M4.5 1L7.5 4.5L4.5 8" fill="none" stroke="#fff" stroke-width="1"/></svg>

</body></html>
